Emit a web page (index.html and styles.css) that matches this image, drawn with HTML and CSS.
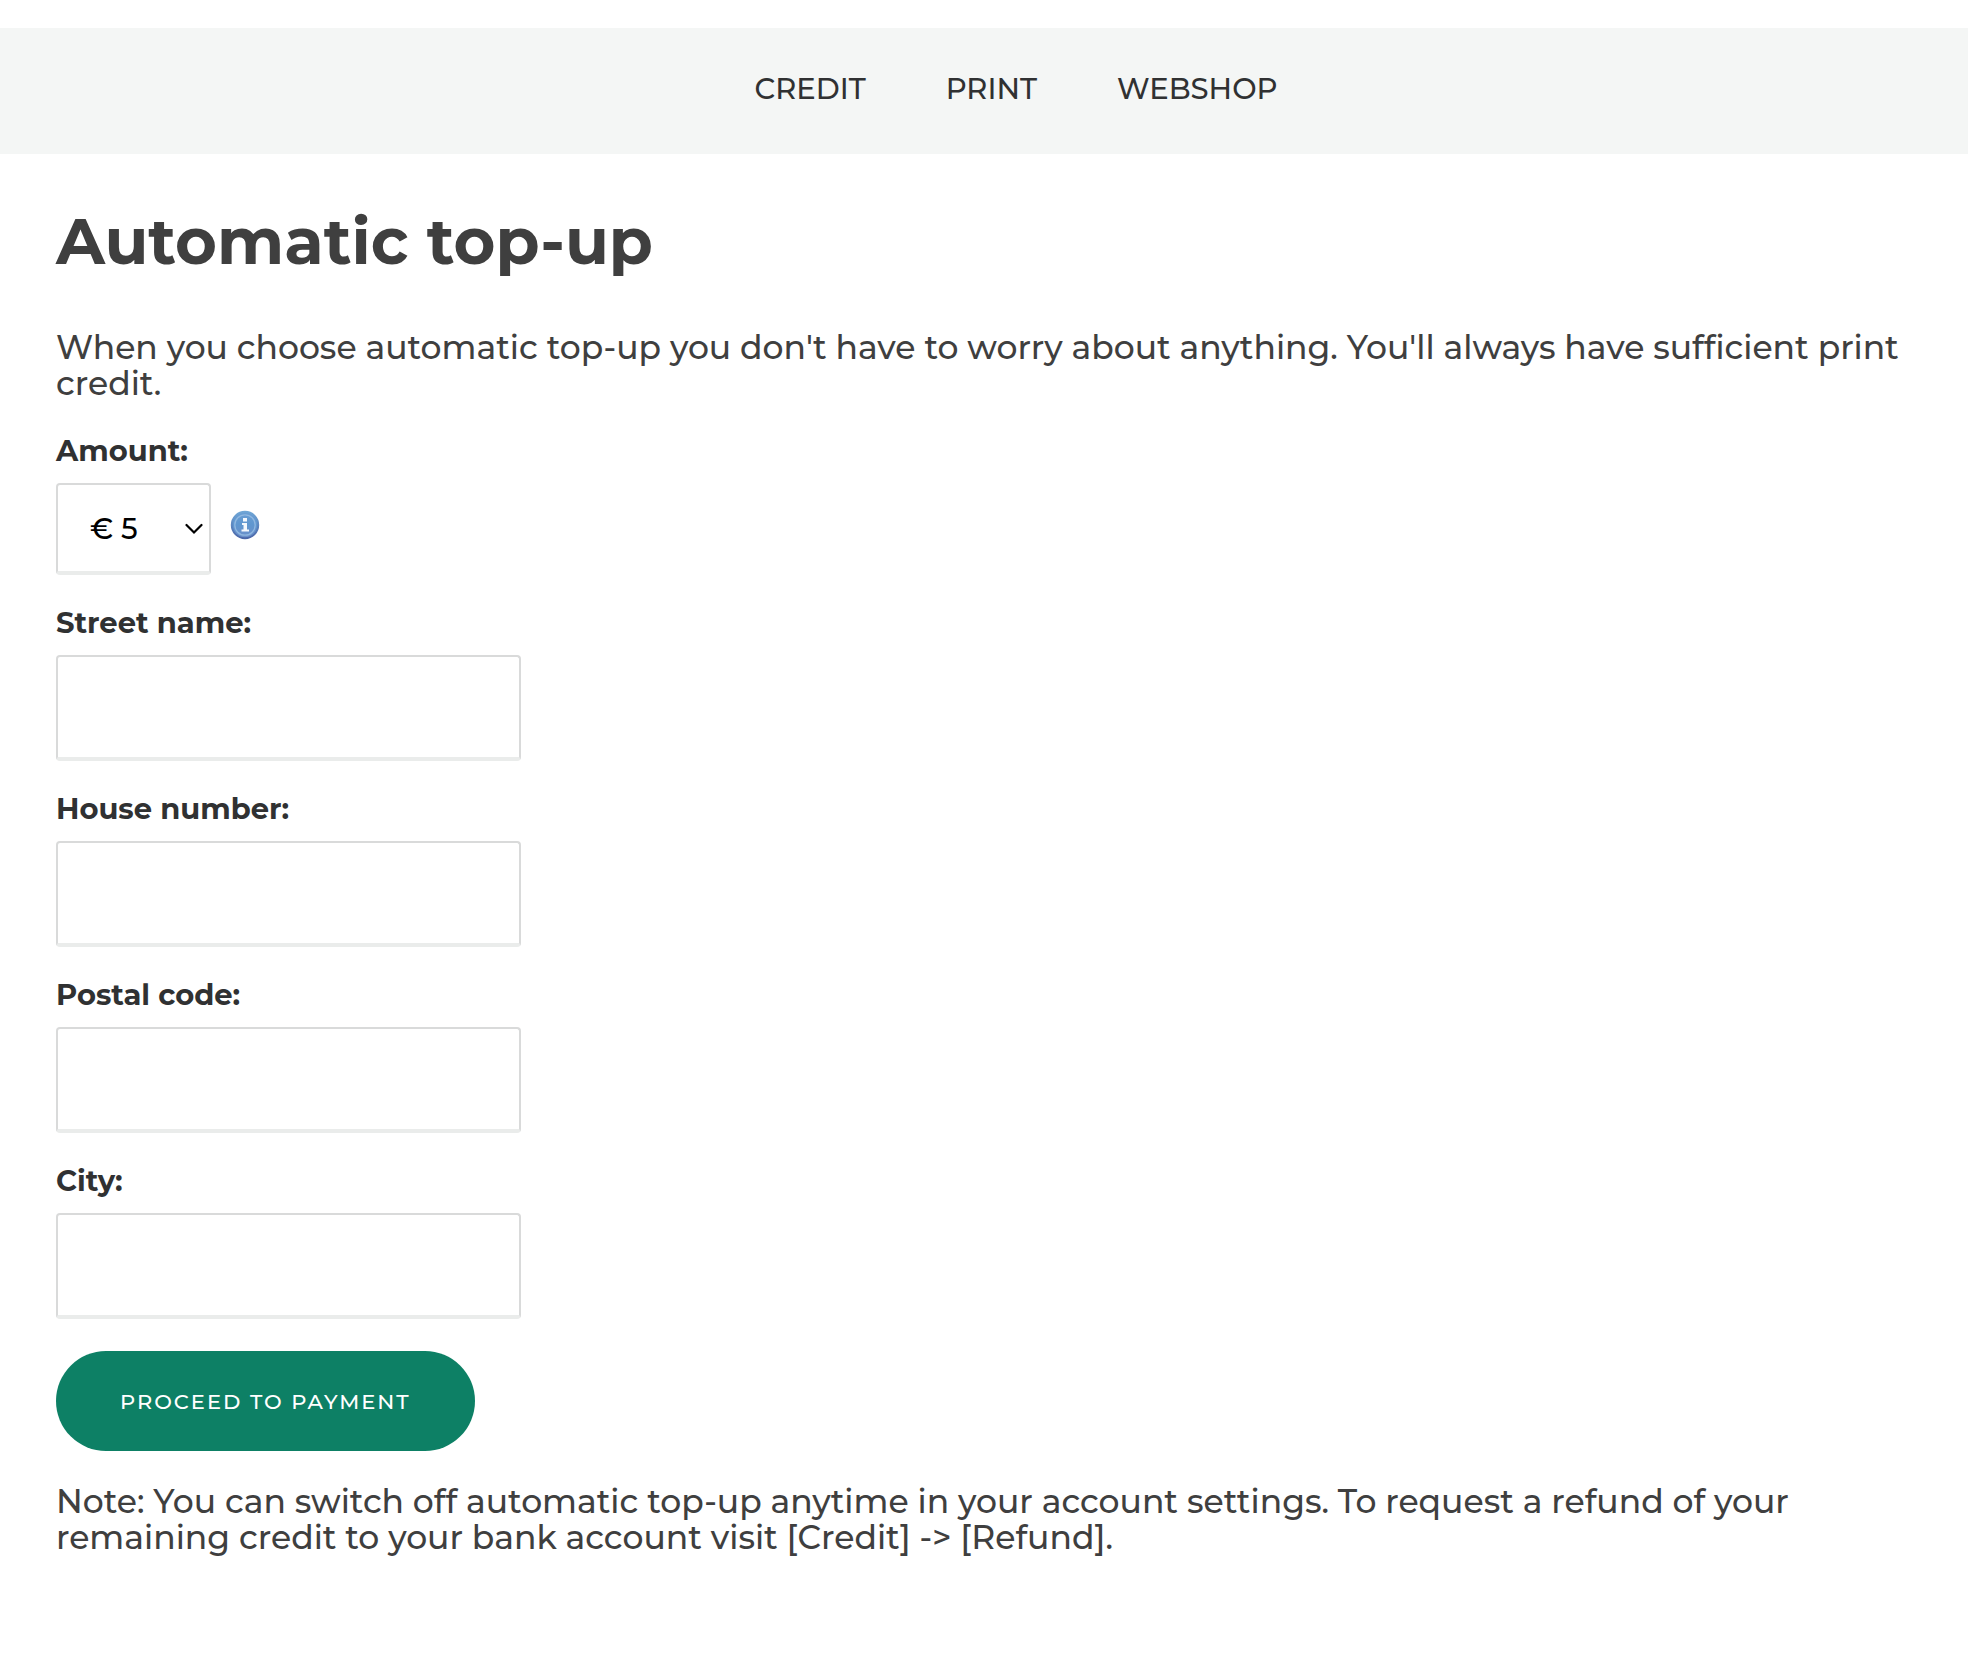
FILE: index.html
```html
<!DOCTYPE html>
<html lang="en">
<head>
    <meta charset="UTF-8">
    <meta name="viewport" content="width=device-width, initial-scale=1.0">
    <title>Automatic top-up</title>
    <link rel="stylesheet" href="styles.css">
</head>
<body>
    <nav class="navbar">
        <ul class="nav-list">
            <li><a href="#credit">CREDIT</a></li>
            <li><a href="#print">PRINT</a></li>
            <li><a href="#webshop">WEBSHOP</a></li>
        </ul>
    </nav>

    <main class="container">
        <h1>Automatic top-up</h1>

        <p>When you choose automatic top-up you don't have to worry about anything. You'll always have sufficient print credit.</p>

        <form id="topupForm" class="topup-form">
            <div class="form-group">
                <label for="amount">Amount:</label>
                <div class="amount-row">
                    <div class="select-wrap">
                        <select id="amount">
                            <option>€ 5</option>
                            <option>€ 10</option>
                            <option>€ 20</option>
                        </select>
                        <svg class="chevron" viewBox="0 0 18 12" aria-hidden="true">
                            <path d="M1.500 2L9 9.500L16.500 2" fill="none" stroke="#000" stroke-width="2.200" stroke-linecap="round"/>
                        </svg>
                    </div>
                    <svg class="info-icon" viewBox="0 0 30 30" aria-hidden="true">
                        <defs>
                            <linearGradient id="infoFill" x1="0" y1="0" x2="0" y2="1">
                                <stop offset="0" stop-color="#6a9fd4"/>
                                <stop offset="0.5" stop-color="#5f96cf"/>
                                <stop offset="1" stop-color="#6d8fca"/>
                            </linearGradient>
                            <linearGradient id="infoEdge" x1="0" y1="0" x2="0" y2="1">
                                <stop offset="0" stop-color="#6fa6d6"/>
                                <stop offset="1" stop-color="#4a67a9"/>
                            </linearGradient>
                        </defs>
                        <circle cx="15" cy="15" r="13.200" fill="url(#infoFill)" stroke="url(#infoEdge)" stroke-width="2"/>
                        <circle cx="15" cy="15" r="10.200" fill="none" stroke="#8fb7e0" stroke-width="1.300"/>
                        <rect x="13" y="8" width="4" height="3.500" fill="#f4f8fd"/>
                        <path d="M12 13H17V19.500H19V21.500H11.500V19.500H13.500V15H12Z" fill="#f4f8fd"/>
                    </svg>
                </div>
            </div>

            <div class="form-group">
                <label for="street">Street name:</label>
                <input type="text" id="street">
            </div>

            <div class="form-group">
                <label for="house">House number:</label>
                <input type="text" id="house">
            </div>

            <div class="form-group">
                <label for="postal">Postal code:</label>
                <input type="text" id="postal">
            </div>

            <div class="form-group">
                <label for="city">City:</label>
                <input type="text" id="city">
            </div>

            <button type="submit">PROCEED TO PAYMENT</button>
        </form>

        <p>Note: You can switch off automatic top-up anytime in your account settings. To request a refund of your remaining credit to your bank account visit [Credit] -&gt; [Refund].</p>
    </main>
</body>
</html>
```
FILE: styles.css
```css
* {
    box-sizing: border-box;
}

body {
    margin: 0;
    padding-top: 28px;
    font-family: Montserrat, Inter, sans-serif;
    font-weight: 500;
    color: #3f3f3f;
    background-color: #fff;
}

.navbar {
    padding: 43px 0 47px 64px;
    background-color: #f4f6f5;
}

.nav-list {
    display: flex;
    justify-content: center;
    gap: 80px;
    margin: 0;
    padding: 0;
    list-style: none;
}

.nav-list a {
    display: block;
    font-size: 29px;
    line-height: 36px;
    color: #303132;
    text-decoration: none;
}

.container {
    padding: 45px 40px 0 56px;
}

h1 {
    margin: 0 0 46px;
    font-size: 64px;
    line-height: 84px;
    font-weight: 700;
}

p {
    margin: 0 0 32px;
    font-size: 33px;
    line-height: 36px;
}

.topup-form {
    margin-bottom: 32px;
}

.form-group {
    margin-bottom: 30px;
}

label {
    display: block;
    margin-bottom: 14px;
    font-size: 29px;
    line-height: 36px;
    font-weight: 700;
    color: #303132;
}

input,
select {
    border: 2px solid #d9dada;
    border-bottom: 4px solid #eaeceb;
    border-radius: 4px;
    background-color: #fff;
    font-family: inherit;
    font-size: 29px;
    font-weight: 500;
    color: #000;
}

input {
    display: block;
    width: 465px;
    max-width: 100%;
    height: 106px;
    padding: 0 32px;
}

.amount-row {
    display: flex;
    align-items: center;
    gap: 19px;
}

.select-wrap {
    position: relative;
}

select {
    display: block;
    width: 155px;
    height: 92px;
    padding: 0 32px;
    appearance: none;
}

.chevron {
    position: absolute;
    right: 8px;
    top: 40px;
    width: 18px;
    height: 12px;
    pointer-events: none;
}

.info-icon {
    width: 30px;
    height: 30px;
    margin-bottom: 8px;
}

button {
    display: block;
    height: 100px;
    margin-top: 32px;
    padding: 0 64px;
    border: none;
    border-radius: 50px;
    background-color: #0d8065;
    color: #fff;
    font-family: inherit;
    font-size: 21px;
    font-weight: 500;
    letter-spacing: 2px;
    cursor: pointer;
}

button:hover {
    background-color: #0a6b54;
}
```
